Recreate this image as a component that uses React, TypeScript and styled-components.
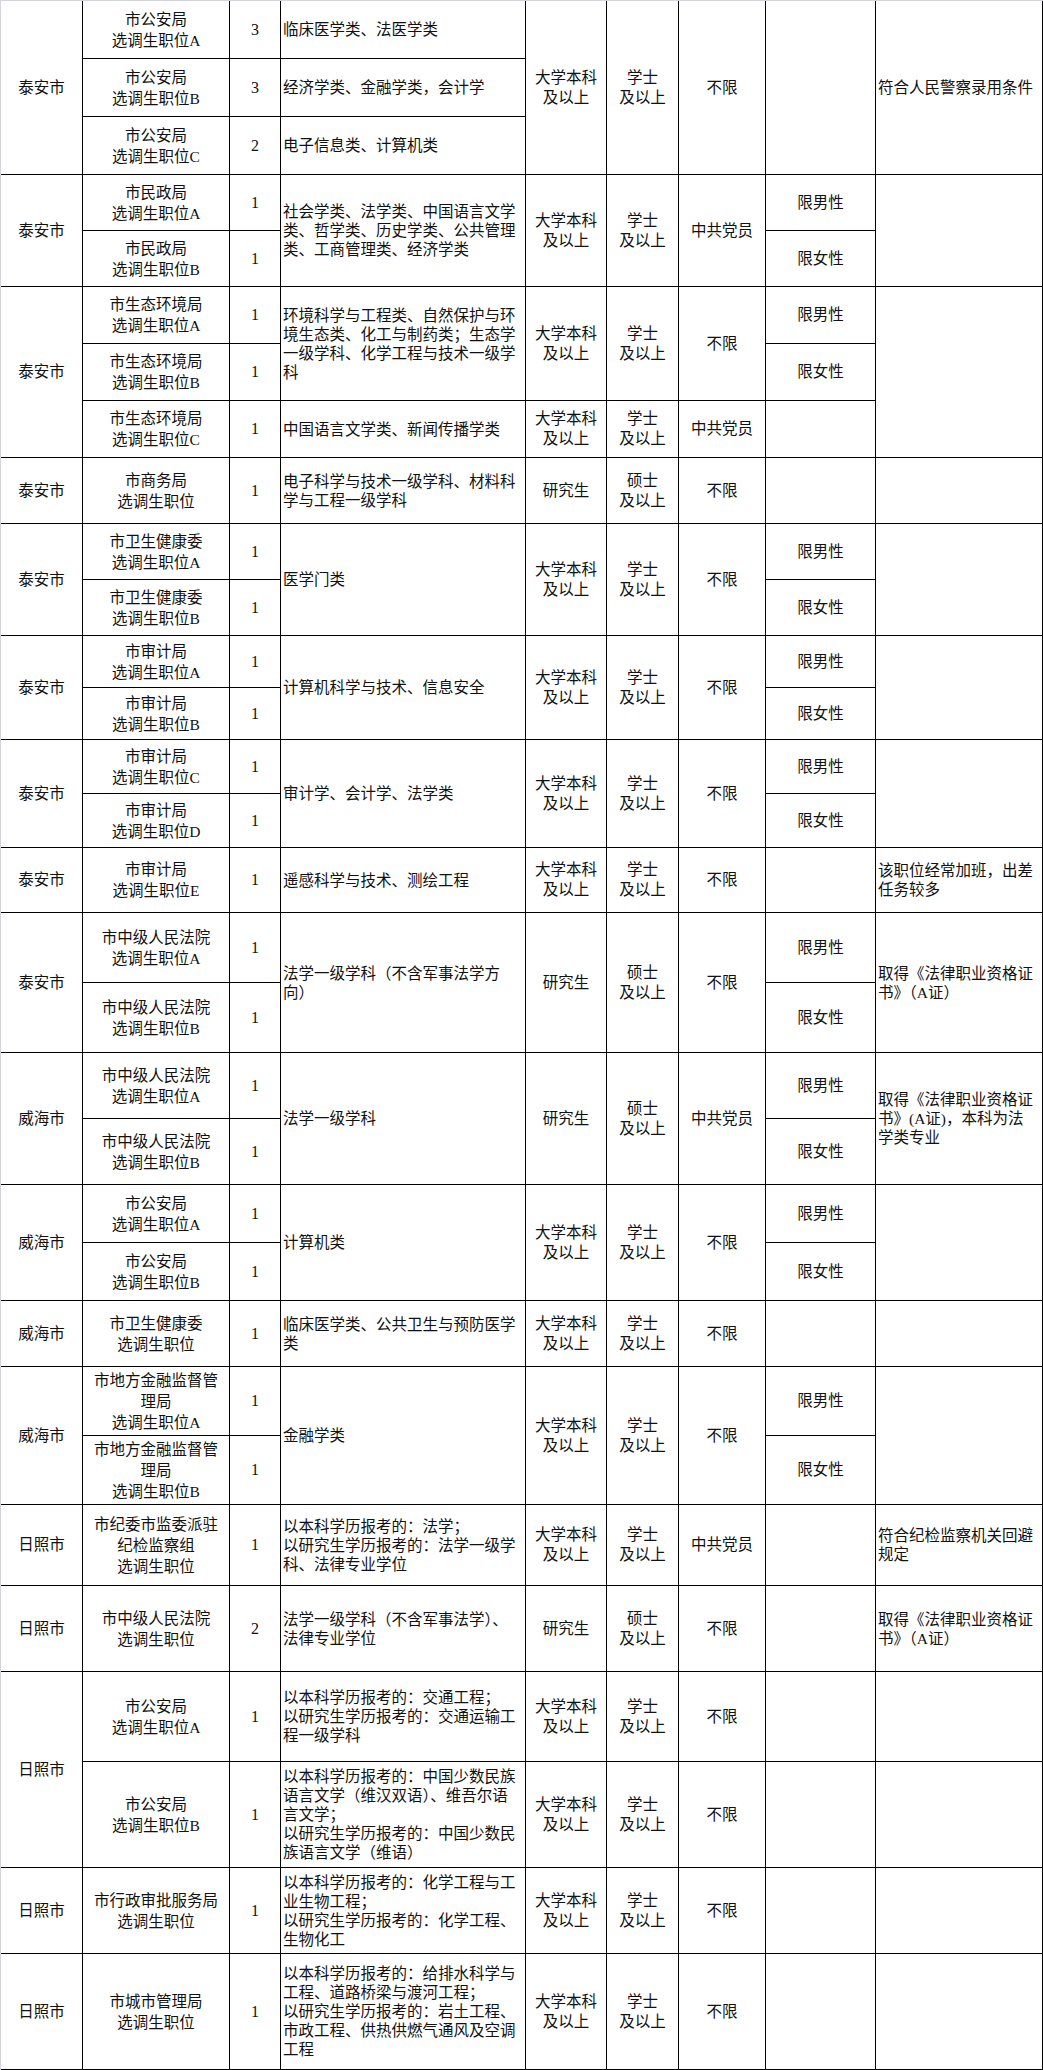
import React from "react";
import styled, { createGlobalStyle } from "styled-components";

const Global = createGlobalStyle`
  html, body { margin: 0; padding: 0; background: #fff; }
  body {
    font-family: "Liberation Serif", "Noto Sans CJK SC", serif;
    color: #111;
  }
`;

const Sheet = styled.div`
  width: 1043px;
  box-sizing: border-box;
  border-top: 1px solid #d3d3de;
  border-left: 1px solid #d3d3de;
  background: #fff;
`;

const Grid = styled.table`
  border-collapse: separate;
  border-spacing: 0;
  table-layout: fixed;
  width: 1042px;
`;

const Col = styled.col<{ $w: number }>`
  width: ${(p) => p.$w}px;
`;

const Row = styled.tr<{ $h: number }>`
  height: ${(p) => p.$h}px;
`;

type Kind = "city" | "unit" | "num" | "major" | "mid" | "note";

const Cell = styled.td<{ $k: Kind }>`
  box-sizing: border-box;
  border-right: 1px solid #000;
  border-bottom: 1px solid #000;
  padding: 0 2px;
  vertical-align: middle;
  white-space: pre-line;
  overflow: hidden;
  font-size: ${(p) => (p.$k === "num" ? "16px" : "15.5px")};
  line-height: ${(p) =>
    p.$k === "unit" ? "21px" : p.$k === "major" || p.$k === "note" ? "19px" : "20px"};
  text-align: ${(p) => (p.$k === "major" || p.$k === "note" ? "left" : "center")};
`;

type C = { t: string; k: Kind; rs?: number };

const widths = [82, 147, 51, 245, 81, 72, 87, 110, 167];

const BK = "大学本科\n及以上";
const XS = "学士\n及以上";
const SS = "硕士\n及以上";

const city = (t: string, rs = 1): C => ({ t, k: "city", rs });
const unit = (t: string): C => ({ t, k: "unit" });
const num = (t: string): C => ({ t, k: "num" });
const major = (t: string, rs = 1): C => ({ t, k: "major", rs });
const mid = (t: string, rs = 1): C => ({ t, k: "mid", rs });
const note = (t: string, rs = 1): C => ({ t, k: "note", rs });

const rows: { h: number; cells: C[] }[] = [
  // 泰安 公安
  {
    h: 58,
    cells: [
      city("泰安市", 3),
      unit("市公安局\n选调生职位A"),
      num("3"),
      major("临床医学类、法医学类"),
      mid(BK, 3),
      mid(XS, 3),
      mid("不限", 3),
      mid("", 3),
      note("符合人民警察录用条件", 3),
    ],
  },
  { h: 58, cells: [unit("市公安局\n选调生职位B"), num("3"), major("经济学类、金融学类，会计学")] },
  { h: 58, cells: [unit("市公安局\n选调生职位C"), num("2"), major("电子信息类、计算机类")] },
  // 泰安 民政
  {
    h: 56,
    cells: [
      city("泰安市", 2),
      unit("市民政局\n选调生职位A"),
      num("1"),
      major("社会学类、法学类、中国语言文学类、哲学类、历史学类、公共管理类、工商管理类、经济学类", 2),
      mid(BK, 2),
      mid(XS, 2),
      mid("中共党员", 2),
      mid("限男性"),
      note("", 2),
    ],
  },
  { h: 56, cells: [unit("市民政局\n选调生职位B"), num("1"), mid("限女性")] },
  // 泰安 生态环境
  {
    h: 57,
    cells: [
      city("泰安市", 3),
      unit("市生态环境局\n选调生职位A"),
      num("1"),
      major("环境科学与工程类、自然保护与环境生态类、化工与制药类；生态学一级学科、化学工程与技术一级学科", 2),
      mid(BK, 2),
      mid(XS, 2),
      mid("不限", 2),
      mid("限男性"),
      note("", 3),
    ],
  },
  { h: 57, cells: [unit("市生态环境局\n选调生职位B"), num("1"), mid("限女性")] },
  {
    h: 57,
    cells: [
      unit("市生态环境局\n选调生职位C"),
      num("1"),
      major("中国语言文学类、新闻传播学类"),
      mid(BK),
      mid(XS),
      mid("中共党员"),
      mid(""),
    ],
  },
  // 泰安 商务
  {
    h: 66,
    cells: [
      city("泰安市"),
      unit("市商务局\n选调生职位"),
      num("1"),
      major("电子科学与技术一级学科、材料科学与工程一级学科"),
      mid("研究生"),
      mid(SS),
      mid("不限"),
      mid(""),
      note(""),
    ],
  },
  // 泰安 卫健
  {
    h: 56,
    cells: [
      city("泰安市", 2),
      unit("市卫生健康委\n选调生职位A"),
      num("1"),
      major("医学门类", 2),
      mid(BK, 2),
      mid(XS, 2),
      mid("不限", 2),
      mid("限男性"),
      note("", 2),
    ],
  },
  { h: 56, cells: [unit("市卫生健康委\n选调生职位B"), num("1"), mid("限女性")] },
  // 泰安 审计 AB
  {
    h: 52,
    cells: [
      city("泰安市", 2),
      unit("市审计局\n选调生职位A"),
      num("1"),
      major("计算机科学与技术、信息安全", 2),
      mid(BK, 2),
      mid(XS, 2),
      mid("不限", 2),
      mid("限男性"),
      note("", 2),
    ],
  },
  { h: 52, cells: [unit("市审计局\n选调生职位B"), num("1"), mid("限女性")] },
  // 泰安 审计 CD
  {
    h: 54,
    cells: [
      city("泰安市", 2),
      unit("市审计局\n选调生职位C"),
      num("1"),
      major("审计学、会计学、法学类", 2),
      mid(BK, 2),
      mid(XS, 2),
      mid("不限", 2),
      mid("限男性"),
      note("", 2),
    ],
  },
  { h: 54, cells: [unit("市审计局\n选调生职位D"), num("1"), mid("限女性")] },
  // 泰安 审计 E
  {
    h: 65,
    cells: [
      city("泰安市"),
      unit("市审计局\n选调生职位E"),
      num("1"),
      major("遥感科学与技术、测绘工程"),
      mid(BK),
      mid(XS),
      mid("不限"),
      mid(""),
      note("该职位经常加班，出差任务较多"),
    ],
  },
  // 泰安 法院
  {
    h: 70,
    cells: [
      city("泰安市", 2),
      unit("市中级人民法院\n选调生职位A"),
      num("1"),
      major("法学一级学科（不含军事法学方向）", 2),
      mid("研究生", 2),
      mid(SS, 2),
      mid("不限", 2),
      mid("限男性"),
      note("取得《法律职业资格证书》（A证）", 2),
    ],
  },
  { h: 70, cells: [unit("市中级人民法院\n选调生职位B"), num("1"), mid("限女性")] },
  // 威海 法院
  {
    h: 66,
    cells: [
      city("威海市", 2),
      unit("市中级人民法院\n选调生职位A"),
      num("1"),
      major("法学一级学科", 2),
      mid("研究生", 2),
      mid(SS, 2),
      mid("中共党员", 2),
      mid("限男性"),
      note("取得《法律职业资格证书》(A证)，本科为法\n学类专业", 2),
    ],
  },
  { h: 66, cells: [unit("市中级人民法院\n选调生职位B"), num("1"), mid("限女性")] },
  // 威海 公安
  {
    h: 58,
    cells: [
      city("威海市", 2),
      unit("市公安局\n选调生职位A"),
      num("1"),
      major("计算机类", 2),
      mid(BK, 2),
      mid(XS, 2),
      mid("不限", 2),
      mid("限男性"),
      note("", 2),
    ],
  },
  { h: 58, cells: [unit("市公安局\n选调生职位B"), num("1"), mid("限女性")] },
  // 威海 卫健
  {
    h: 66,
    cells: [
      city("威海市"),
      unit("市卫生健康委\n选调生职位"),
      num("1"),
      major("临床医学类、公共卫生与预防医学类"),
      mid(BK),
      mid(XS),
      mid("不限"),
      mid(""),
      note(""),
    ],
  },
  // 威海 金融
  {
    h: 69,
    cells: [
      city("威海市", 2),
      unit("市地方金融监督管\n理局\n选调生职位A"),
      num("1"),
      major("金融学类", 2),
      mid(BK, 2),
      mid(XS, 2),
      mid("不限", 2),
      mid("限男性"),
      note("", 2),
    ],
  },
  { h: 69, cells: [unit("市地方金融监督管\n理局\n选调生职位B"), num("1"), mid("限女性")] },
  // 日照 纪委
  {
    h: 81,
    cells: [
      city("日照市"),
      unit("市纪委市监委派驻\n纪检监察组\n选调生职位"),
      num("1"),
      major("以本科学历报考的：法学；\n以研究生学历报考的：法学一级学科、法律专业学位"),
      mid(BK),
      mid(XS),
      mid("中共党员"),
      mid(""),
      note("符合纪检监察机关回避规定"),
    ],
  },
  // 日照 法院
  {
    h: 86,
    cells: [
      city("日照市"),
      unit("市中级人民法院\n选调生职位"),
      num("2"),
      major("法学一级学科（不含军事法学）、法律专业学位"),
      mid("研究生"),
      mid(SS),
      mid("不限"),
      mid(""),
      note("取得《法律职业资格证书》（A证）"),
    ],
  },
  // 日照 公安
  {
    h: 90,
    cells: [
      city("日照市", 2),
      unit("市公安局\n选调生职位A"),
      num("1"),
      major("以本科学历报考的：交通工程；\n以研究生学历报考的：交通运输工程一级学科"),
      mid(BK),
      mid(XS),
      mid("不限"),
      mid(""),
      note(""),
    ],
  },
  {
    h: 106,
    cells: [
      unit("市公安局\n选调生职位B"),
      num("1"),
      major(
        "以本科学历报考的：中国少数民族语言文学（维汉双语）、维吾尔语言文学；\n以研究生学历报考的：中国少数民族语言文学（维语）"
      ),
      mid(BK),
      mid(XS),
      mid("不限"),
      mid(""),
      note(""),
    ],
  },
  // 日照 行政审批
  {
    h: 86,
    cells: [
      city("日照市"),
      unit("市行政审批服务局\n选调生职位"),
      num("1"),
      major("以本科学历报考的：化学工程与工业生物工程；\n以研究生学历报考的：化学工程、生物化工"),
      mid(BK),
      mid(XS),
      mid("不限"),
      mid(""),
      note(""),
    ],
  },
  // 日照 城市管理
  {
    h: 116,
    cells: [
      city("日照市"),
      unit("市城市管理局\n选调生职位"),
      num("1"),
      major(
        "以本科学历报考的：给排水科学与工程、道路桥梁与渡河工程；\n以研究生学历报考的：岩土工程、市政工程、供热供燃气通风及空调工程"
      ),
      mid(BK),
      mid(XS),
      mid("不限"),
      mid(""),
      note(""),
    ],
  },
];

export default function App() {
  return (
    <>
      <Global />
      <Sheet>
        <Grid>
          <colgroup>
            {widths.map((w, i) => (
              <Col key={i} $w={w} />
            ))}
          </colgroup>
          <tbody>
            {rows.map((r, i) => (
              <Row key={i} $h={r.h}>
                {r.cells.map((c, j) => (
                  <Cell key={j} $k={c.k} rowSpan={c.rs && c.rs > 1 ? c.rs : undefined}>
                    {c.t}
                  </Cell>
                ))}
              </Row>
            ))}
          </tbody>
        </Grid>
      </Sheet>
    </>
  );
}
